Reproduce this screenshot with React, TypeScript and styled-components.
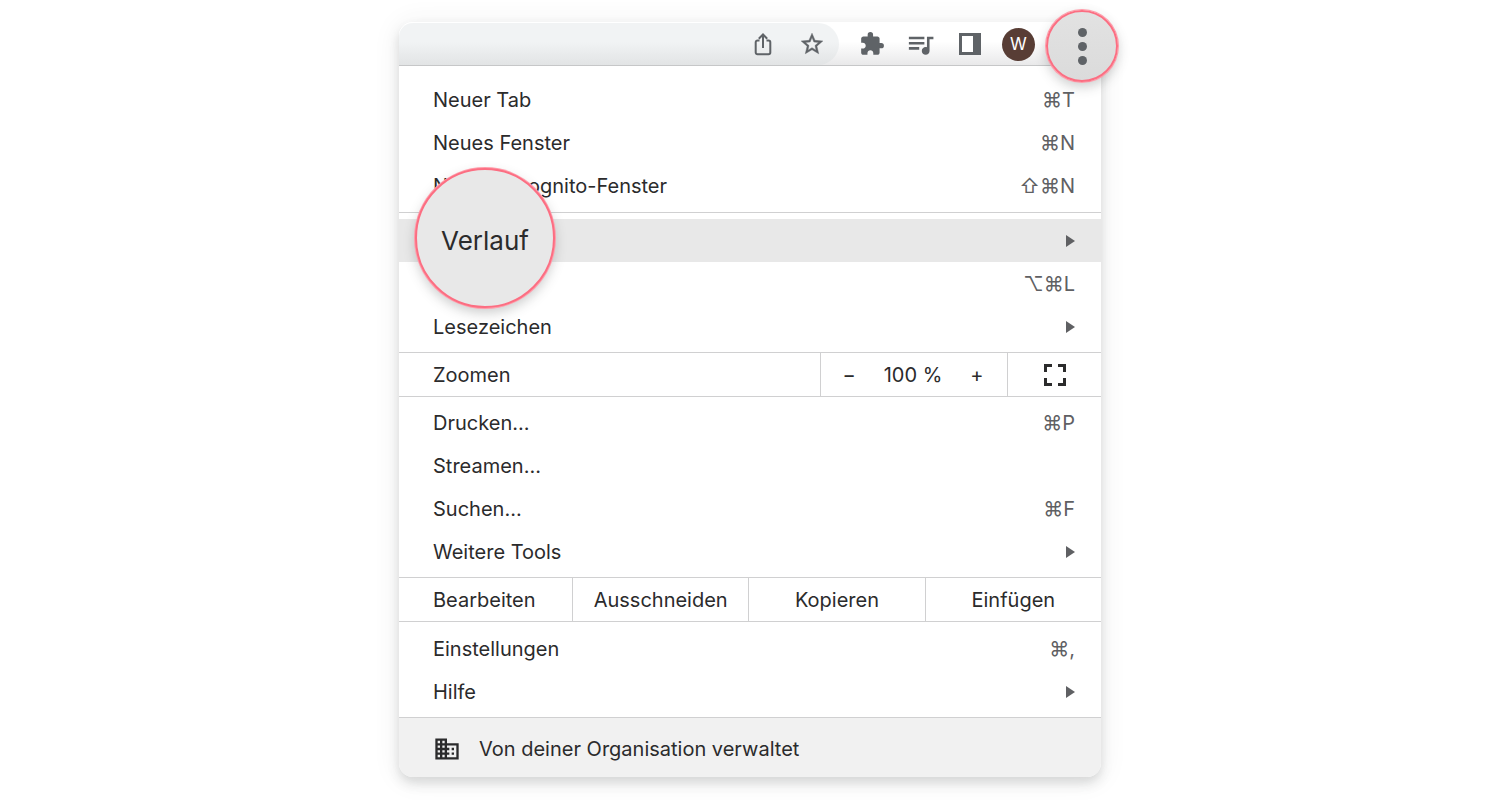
import React from "react";
import styled, { createGlobalStyle } from "styled-components";
import { MdDomain, MdExtension, MdQueueMusic, MdStarOutline } from "react-icons/md";

const ink = "#2b2b2c";
const muted = "#5f6063";
const line = "#d0d0d1";
const accent = "#fc6e82";

const GlobalStyle = createGlobalStyle`
  *, *::before, *::after { box-sizing: border-box; }
  body {
    margin: 0;
    background: #fff;
    color: ${ink};
    font-family: Inter, "Liberation Sans", sans-serif;
    font-size: 20px;
    line-height: 24px;
  }
  button {
    margin: 0;
    padding: 0;
    border: 0;
    background: none;
    color: inherit;
    font: inherit;
    cursor: pointer;
  }
  svg { display: block; }
`;

const Page = styled.main`
  display: flex;
  justify-content: center;
  padding: 22px 16px 23px;
`;

const Browser = styled.section`
  width: 100%;
  max-width: 702px;
  border-radius: 14px;
  background: #fff;
  box-shadow: 0 6px 12px rgba(60, 64, 67, 0.18), 0 2px 28px rgba(60, 64, 67, 0.08);
`;

const Toolbar = styled.header`
  position: relative;
  display: flex;
  align-items: center;
  height: 44px;
  padding-top: 1px;
  border-bottom: 1px solid #c6c7c8;
  border-radius: 14px 14px 0 0;
  background: linear-gradient(#fff 45%, #e9e9ea);
`;

const AddressBar = styled.div`
  display: flex;
  flex: 1;
  align-items: center;
  justify-content: flex-end;
  gap: 23px;
  align-self: stretch;
  padding-right: 14px;
  border-radius: 14px 21px 21px 0;
  background: linear-gradient(#f1f3f4 45%, #e2e4e5);
`;

const Actions = styled.div`
  display: flex;
  align-items: center;
  gap: 16px;
  padding: 0 66px 0 16px;
`;

const IconButton = styled.button`
  display: grid;
  place-items: center;
  width: 33px;
  height: 33px;
  color: #5f6367;

  ${AddressBar} & {
    width: 26px;
  }
`;

const StarIcon = styled(MdStarOutline)`
  stroke: currentColor;
  stroke-width: 0.4px;
`;

const Avatar = styled.button`
  width: 33px;
  height: 33px;
  border-radius: 50%;
  background: #583d35;
  color: #fff;
  font-size: 17px;
`;

const Lens = styled.button`
  position: absolute;
  border: 2px solid ${accent};
  border-radius: 50%;
  box-shadow: 0 0 0 1px #ff9dab, 0 5px 12px rgba(60, 64, 67, 0.26);
`;

const MenuLens = styled(Lens)`
  top: -12px;
  right: -17px;
  display: flex;
  flex-direction: column;
  align-items: center;
  justify-content: center;
  gap: 5px;
  width: 72px;
  height: 72px;
  background: linear-gradient(#e2e2e2, #dbdbdb);
`;

const Dot = styled.span`
  width: 9px;
  height: 9px;
  border-radius: 50%;
  background: #5f6367;
`;

const HistoryLens = styled(Lens)`
  z-index: 1;
  top: -51px;
  left: 16px;
  width: 140px;
  height: 140px;
  padding-top: 6px;
  background: #e8e8e8;
  font-size: 26px;
`;

const Group = styled.ul<{ $top: number; $bottom: number }>`
  margin: 0;
  padding: ${(p) => p.$top}px 0 ${(p) => p.$bottom}px;
  border-bottom: 1px solid ${line};
  list-style: none;
`;

const Item = styled.li<{ $active?: boolean }>`
  position: relative;
  height: 43px;
  background: ${(p) => (p.$active ? "#e8e8e8" : "transparent")};
  z-index: ${(p) => (p.$active ? 1 : "auto")};
`;

const ItemButton = styled.button`
  display: flex;
  align-items: center;
  justify-content: space-between;
  width: 100%;
  height: 43px;
  padding: 0 26px 0 34px;
  text-align: left;
`;

const Shortcut = styled.kbd`
  margin-left: auto;
  color: ${muted};
  font: inherit;
`;

const Submenu = styled.svg`
  width: 9px;
  height: 12px;
  margin-left: auto;
  fill: ${muted};
`;

const SplitRow = styled.div`
  display: flex;
  height: 44px;
  border-bottom: 1px solid ${line};
`;

const SplitLabel = styled.div<{ $width?: number }>`
  display: flex;
  flex: ${(p) => (p.$width ? `0 0 ${p.$width}px` : "1")};
  align-items: center;
  padding-left: 34px;
`;

const ZoomControls = styled.div`
  display: flex;
  align-items: center;
  justify-content: space-between;
  width: 187px;
  padding: 0 20px 0 18px;
  border-left: 1px solid ${line};
`;

const StepButton = styled.button`
  width: 20px;
  height: 32px;
`;

const CellButton = styled.button<{ $width?: number }>`
  display: flex;
  flex: ${(p) => (p.$width ? `0 0 ${p.$width}px` : "1")};
  align-items: center;
  justify-content: center;
  border-left: 1px solid ${line};
`;

const Footer = styled.footer`
  display: flex;
  align-items: center;
  gap: 18px;
  height: 59px;
  padding: 3px 34px 0;
  border-radius: 0 0 14px 14px;
  background: #f1f1f1;
`;

const ShareIcon = () => (
  <svg width="20" height="24" viewBox="0 0 20 24" fill="none" stroke="currentColor" strokeWidth="2" aria-hidden="true">
    <path d="M6.5 8.5H4.5A1.8 1.8 0 0 0 2.7 10.3V20.5A1.8 1.8 0 0 0 4.5 22.3H15.5A1.8 1.8 0 0 0 17.3 20.5V10.3A1.8 1.8 0 0 0 15.5 8.5H13.5" />
    <path d="M10 16V2.5M5.8 6.7L10 2.5L14.2 6.7" />
  </svg>
);

const SidePanelIcon = () => (
  <svg width="22" height="22" viewBox="0 0 22 22" aria-hidden="true">
    <path d="M3 3H14V19H3Z" fill="#fff" />
    <path d="M0 0H22V22H0ZM3 3V19H14V3Z" fill="currentColor" fillRule="evenodd" />
  </svg>
);

const FullscreenIcon = () => (
  <svg width="22" height="22" viewBox="0 0 22 22" fill="none" stroke="currentColor" strokeWidth="3" aria-hidden="true">
    <path d="M1.5 8V1.5H8M14 1.5H20.5V8M20.5 14V20.5H14M8 20.5H1.5V14" />
  </svg>
);

type Entry = {
  label: string;
  keys?: string;
  submenu?: boolean;
  magnified?: boolean;
  /** The label lies wholly under the lens of the row above. */
  covered?: boolean;
};

const windows: Entry[] = [
  { label: "Neuer Tab", keys: "⌘T" },
  { label: "Neues Fenster", keys: "⌘N" },
  { label: "Neues Incognito-Fenster", keys: "⇧⌘N" },
];
const library: Entry[] = [
  { label: "Verlauf", submenu: true, magnified: true },
  { label: "Downloads", keys: "⌥⌘L", covered: true },
  { label: "Lesezeichen", submenu: true },
];
const tools: Entry[] = [
  { label: "Drucken...", keys: "⌘P" },
  { label: "Streamen..." },
  { label: "Suchen...", keys: "⌘F" },
  { label: "Weitere Tools", submenu: true },
];
const settings: Entry[] = [
  { label: "Einstellungen", keys: "⌘," },
  { label: "Hilfe", submenu: true },
];

const MenuGroup = ({ entries, top, bottom }: { entries: Entry[]; top: number; bottom: number }) => (
  <Group $top={top} $bottom={bottom}>
    {entries.map((e) => (
      <Item key={e.label} $active={e.magnified}>
        <ItemButton type="button" aria-label={e.label}>
          {!e.magnified && !e.covered && <span>{e.label}</span>}
          {e.keys && <Shortcut>{e.keys}</Shortcut>}
          {e.submenu && (
            <Submenu viewBox="0 0 9 12" aria-hidden="true">
              <path d="M0 0L9 6L0 12Z" />
            </Submenu>
          )}
        </ItemButton>
        {e.magnified && <HistoryLens type="button">{e.label}</HistoryLens>}
      </Item>
    ))}
  </Group>
);

export default function App() {
  return (
    <>
      <GlobalStyle />
      <Page>
        <Browser>
          <Toolbar>
            <AddressBar>
              <IconButton type="button" aria-label="Teilen"><ShareIcon /></IconButton>
              <IconButton type="button" aria-label="Lesezeichen setzen"><StarIcon size={26} /></IconButton>
            </AddressBar>
            <Actions>
              <IconButton type="button" aria-label="Erweiterungen"><MdExtension size={26} /></IconButton>
              <IconButton type="button" aria-label="Mediensteuerung"><MdQueueMusic size={31} /></IconButton>
              <IconButton type="button" aria-label="Seitenleiste"><SidePanelIcon /></IconButton>
              <Avatar type="button">W</Avatar>
            </Actions>
            <MenuLens type="button" aria-label="Menü">
              <Dot /><Dot /><Dot />
            </MenuLens>
          </Toolbar>

          <MenuGroup entries={windows} top={12} bottom={5} />
          <MenuGroup entries={library} top={6} bottom={4} />
          <SplitRow>
            <SplitLabel>Zoomen</SplitLabel>
            <ZoomControls>
              <StepButton type="button" aria-label="Verkleinern">−</StepButton>
              <span>100 %</span>
              <StepButton type="button" aria-label="Vergrößern">+</StepButton>
            </ZoomControls>
            <CellButton type="button" $width={94} aria-label="Vollbild"><FullscreenIcon /></CellButton>
          </SplitRow>
          <MenuGroup entries={tools} top={4} bottom={4} />
          <SplitRow>
            <SplitLabel $width={173}>Bearbeiten</SplitLabel>
            <CellButton type="button">Ausschneiden</CellButton>
            <CellButton type="button">Kopieren</CellButton>
            <CellButton type="button">Einfügen</CellButton>
          </SplitRow>
          <MenuGroup entries={settings} top={5} bottom={4} />

          <Footer>
            <MdDomain size={28} aria-hidden="true" />
            <span>Von deiner Organisation verwaltet</span>
          </Footer>
        </Browser>
      </Page>
    </>
  );
}
